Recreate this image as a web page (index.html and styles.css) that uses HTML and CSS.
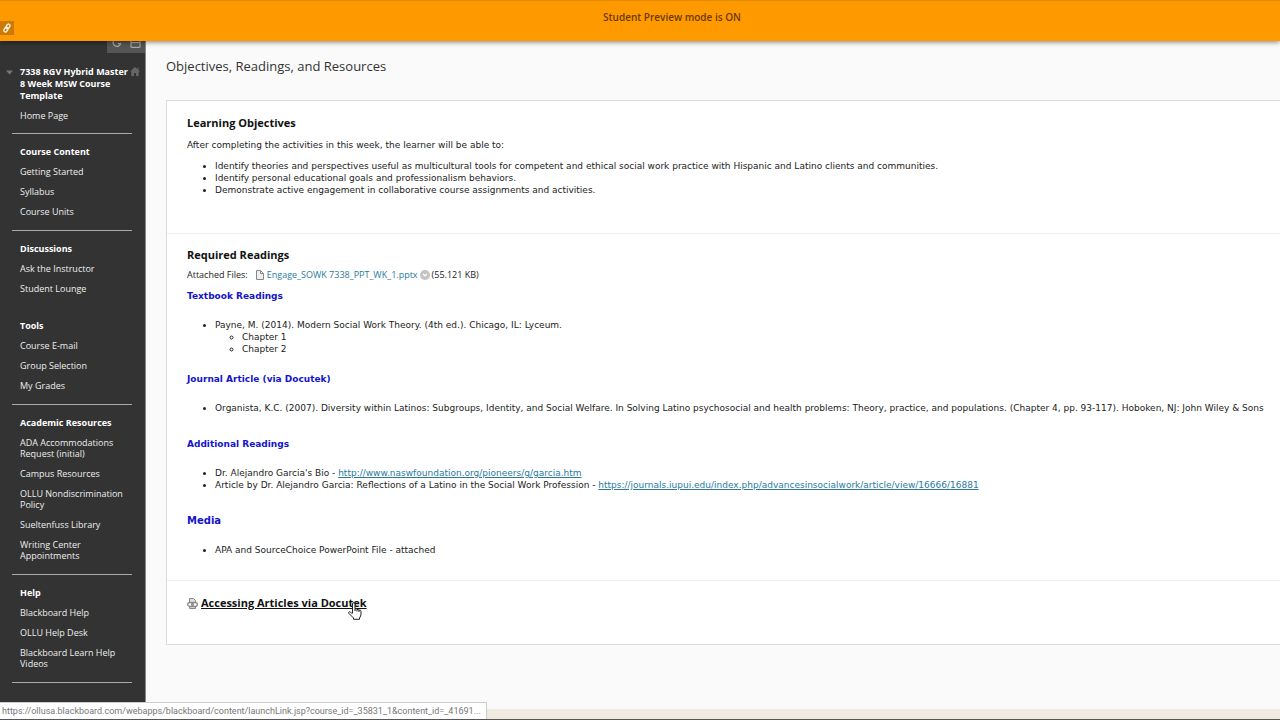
FILE: index.html
```html
<!DOCTYPE html>
<html lang="en">
<head>
<meta charset="utf-8">
<title>Objectives, Readings, and Resources</title>
<link rel="stylesheet" href="styles.css">
</head>
<body>
<div class="page">
  <header class="preview-bar">
    <p class="preview-text">Student Preview mode is ON</p>
    <button class="quick-link" type="button" aria-label="Quick links">
      <svg width="10" height="10" viewBox="0 0 10 10" fill="none" stroke="#fff0d8" stroke-width="1.4"><rect x="4.4" y="0.9" width="3.2" height="5" rx="1.6" transform="rotate(30 6 3.4)"/><rect x="2.3" y="4.1" width="3.2" height="5" rx="1.6" transform="rotate(30 3.9 6.6)"/></svg>
    </button>
  </header>
  <div class="columns">
    <nav class="sidebar" aria-label="Course menu">
      <div class="menu-tools">
        <button class="tool" type="button" aria-label="Refresh"><svg width="10" height="10" viewBox="0 0 10 10" fill="none" stroke="#a8a8a8" stroke-width="1.3"><path d="M2 1.2A3.8 3.8 0 1 0 8.6 4.6H5.8"/></svg></button>
        <button class="tool" type="button" aria-label="Folder view"><svg width="11" height="10" viewBox="0 0 11 10" fill="none" stroke="#a8a8a8" stroke-width="1.2"><path d="M1 3.600h9M1 1v6.4q0 1 1 1h7q1 0 1-1V1"/></svg></button>
      </div>
      <section class="group course">
        <svg class="caret" width="7" height="5" viewBox="0 0 7 5" fill="#777"><path d="M0 .5h7L3.5 4.5z"/></svg>
        <h2 class="course-title">7338 RGV Hybrid Master 8 Week MSW Course Template</h2>
        <svg class="home" width="10" height="9" viewBox="0 0 10 9" fill="#666"><path d="M5 0 0 4.6h1.3V9H4V6h2v3h2.7V4.6H10L8.6 3.3V.6H7.4v1.6z"/></svg>
        <a class="item" href="#">Home Page</a>
      </section>
      <section class="group">
        <h3 class="heading">Course Content</h3>
        <a class="item" href="#">Getting Started</a>
        <a class="item" href="#">Syllabus</a>
        <a class="item" href="#">Course Units</a>
      </section>
      <section class="group plain">
        <h3 class="heading">Discussions</h3>
        <a class="item" href="#">Ask the Instructor</a>
        <a class="item" href="#">Student Lounge</a>
      </section>
      <section class="group">
        <h3 class="heading">Tools</h3>
        <a class="item" href="#">Course E-mail</a>
        <a class="item" href="#">Group Selection</a>
        <a class="item" href="#">My Grades</a>
      </section>
      <section class="group">
        <h3 class="heading">Academic Resources</h3>
        <a class="item" href="#">ADA Accommodations Request (initial)</a>
        <a class="item" href="#">Campus Resources</a>
        <a class="item" href="#">OLLU Nondiscrimination Policy</a>
        <a class="item" href="#">Sueltenfuss Library</a>
        <a class="item" href="#">Writing Center Appointments</a>
      </section>
      <section class="group">
        <h3 class="heading">Help</h3>
        <a class="item" href="#">Blackboard Help</a>
        <a class="item" href="#">OLLU Help Desk</a>
        <a class="item" href="#">Blackboard Learn Help Videos</a>
      </section>
    </nav>
    <main class="main">
      <h1 class="title">Objectives, Readings, and Resources</h1>
      <div class="content">
        <article class="block objectives">
          <h2 class="block-title">Learning Objectives</h2>
          <p class="intro">After completing the activities in this week, the learner will be able to:</p>
          <ul class="list">
            <li>Identify theories and perspectives useful as multicultural tools for competent and ethical social work practice with Hispanic and Latino clients and communities.</li>
            <li>Identify personal educational goals and professionalism behaviors.</li>
            <li>Demonstrate active engagement in collaborative course assignments and activities.</li>
          </ul>
        </article>
        <article class="block readings">
          <h2 class="block-title">Required Readings</h2>
          <div class="files">
            <span>Attached Files:</span>
            <svg class="file-icon" width="8" height="10" viewBox="0 0 8 10" fill="#eee" stroke="#888"><path d="M.5.5h4l3 3v6h-7zM4.5.5v3h3"/></svg>
            <a class="file" href="#">Engage_SOWK 7338_PPT_WK_1.pptx</a>
            <button class="more" type="button" aria-label="File options"><svg width="10" height="10" viewBox="0 0 10 10"><circle cx="5" cy="5" r="5" fill="#c4c4c4"/><path d="m3 4 2 2 2-2" fill="none" stroke="#fff" stroke-width="1.2"/></svg></button>
            <span>(55.121 KB)</span>
          </div>
          <h3 class="sub">Textbook Readings</h3>
          <ul class="list outline">
            <li>Payne, M. (2014). Modern Social Work Theory. (4th ed.). Chicago, IL: Lyceum.
              <ul class="nested"><li>Chapter 1</li><li>Chapter 2</li></ul>
            </li>
          </ul>
          <h3 class="sub">Journal Article (via Docutek)</h3>
          <ul class="list">
            <li>Organista, K.C. (2007). Diversity within Latinos: Subgroups, Identity, and Social Welfare. In Solving Latino psychosocial and health problems: Theory, practice, and populations. (Chapter 4, pp. 93-117). Hoboken, NJ: John Wiley &amp; Sons</li>
          </ul>
          <h3 class="sub">Additional Readings</h3>
          <ul class="list">
            <li>Dr. Alejandro Garcia's Bio - <a class="link" href="#">http://www.naswfoundation.org/pioneers/g/garcia.htm</a></li>
            <li>Article by Dr. Alejandro Garcia: Reflections of a Latino in the Social Work Profession - <a class="link" href="#">https://journals.iupui.edu/index.php/advancesinsocialwork/article/view/16666/16881</a></li>
          </ul>
          <h3 class="sub media">Media</h3>
          <ul class="list">
            <li>APA and SourceChoice PowerPoint File - attached</li>
          </ul>
        </article>
        <article class="block access">
          <svg width="11" height="11" viewBox="0 0 11 11" fill="none" stroke="#888"><path d="M2.5 5V.5h4l2 2V5M2.5 8v2.500h6V8" fill="#ddd"/><rect x=".7" y="4.500" width="5.500" height="4" rx="2" stroke-width="1.3"/><rect x="4.800" y="4.500" width="5.500" height="4" rx="2" stroke-width="1.3"/></svg>
          <a class="access-link" href="#">Accessing Articles via Docutek
            <svg class="pointer" width="14" height="18" viewBox="0 0 14 18" fill="#fff" stroke="#222"><path d="M4.500 11V2q0-1.300 1.200-1.300T7 2v5q1.800-.8 2 .5 1.700-.6 2 .6 2-.4 2 1.300V12q0 2-1.500 4v1.300H5.500V16L1 11.500q-.8-1.400.4-1.800 1-.2 3.100 2.300M7 7v2M9 7.500v2M11 8v2"/></svg>
          </a>
        </article>
      </div>
    </main>
  </div>
  <footer class="strip"></footer>
  <div class="status">https://ollusa.blackboard.com/webapps/blackboard/content/launchLink.jsp?course_id=_35831_1&amp;content_id=_41691...</div>
</div>
</body>
</html>
```
FILE: styles.css
```css
* { box-sizing: border-box; }

body {
  margin: 0;
  font-family: "Open Sans", sans-serif;
  font-size: 9px;
  color: #222;
  overflow-x: hidden;
}

h1, h2, h3, p, ul { margin: 0; }
button { border: 0; padding: 0; }
svg { display: block; flex: none; }

.page {
  position: relative;
  display: flex;
  flex-direction: column;
  min-height: 100vh;
}

.preview-bar {
  position: relative;
  z-index: 2;
  height: 41px;
  padding: 9px 0 0 64px;
  background: #ff9900;
  border-top: 1px solid #e08a08;
  box-shadow: 0 1px 5px rgba(0, 0, 0, 0.5);
  text-align: center;
}

.preview-text {
  font-size: 10px;
  line-height: 14px;
  font-weight: 600;
  color: #6b3a00;
}

.quick-link {
  position: absolute;
  left: 0;
  bottom: 6px;
  width: 14px;
  height: 14px;
  padding: 2px;
  background: #c97a08;
}

.columns {
  display: flex;
  flex: 1;
}

.sidebar {
  position: relative;
  flex: none;
  width: 146px;
  padding: 25px 13px 0 12px;
  background: #333;
  border-right: 1px solid #888;
}

.menu-tools {
  position: absolute;
  top: 0;
  right: 0;
  display: flex;
  height: 12px;
  background: #555;
}

.tool {
  display: flex;
  align-items: end;
  justify-content: center;
  width: 19px;
  height: 8px;
  overflow: hidden;
  background: none;
}

.group {
  display: flex;
  flex-direction: column;
  gap: 9px;
  padding: 12px 0 13px 8px;
  border-bottom: 1px solid #aaa;
}

.plain { border-color: transparent; }

.course {
  position: relative;
  gap: 8px;
  padding-top: 0;
  padding-bottom: 12px;
}

.caret {
  position: absolute;
  left: -6px;
  top: 4px;
}

.home {
  position: absolute;
  right: -8px;
  top: 1px;
}

.course-title {
  font-size: 9px;
  line-height: 12px;
  color: #fff;
}

.heading {
  font-size: 9px;
  line-height: 11px;
  color: #fff;
}

.item {
  line-height: 11px;
  color: #eee;
  text-decoration: none;
}

.main {
  flex: 1;
  min-width: 0;
  padding: 15px 0 0 20px;
  background: #fafafa;
  overflow: hidden;
}

.title {
  margin-bottom: 24px;
  font-size: 13px;
  line-height: 20px;
  font-weight: normal;
  color: #333;
}

.content {
  background: #fff;
  border: 1px solid #ddd;
  border-right: 0;
}

.block {
  padding: 14px 0 0 20px;
  border-bottom: 1px solid #eee;
}

.objectives { padding-bottom: 13px; }

.readings { padding-top: 13px; }

.access {
  display: flex;
  align-items: center;
  gap: 3px;
  padding-bottom: 33px;
  border-bottom: 0;
}

.block-title {
  font-size: 11px;
  line-height: 16px;
  color: #111;
}

.intro {
  margin: 8px 0 9px;
  font: 9px/12px "DejaVu Sans", sans-serif;
}

.list {
  margin-bottom: 24px;
  padding-left: 28px;
  font: 9px/12px "DejaVu Sans", sans-serif;
  white-space: nowrap;
}

.outline { margin-bottom: 18px; }

.nested {
  padding-left: 27px;
}

.files {
  display: flex;
  align-items: center;
  margin-top: 6px;
  line-height: 12px;
}

.file-icon { margin: 0 3px 0 8px; }

.file {
  color: #2a7a9c;
  text-decoration: none;
}

.more {
  margin: 0 2px;
  background: none;
}

.sub {
  margin: 17px 0;
  font: bold 9px/12px "DejaVu Sans", sans-serif;
  color: #1414c8;
}

.files + .sub { margin-top: 9px; }

.media { font-size: 10px; }

.link { color: #2a7a9c; }

.access-link {
  position: relative;
  font-size: 11px;
  line-height: 16px;
  font-weight: bold;
  color: #111;
}

.pointer {
  position: absolute;
  right: 5px;
  top: 7px;
}

.strip {
  height: 11px;
  background: #efebe0;
  border-bottom: 1px solid #555;
}

.status {
  position: absolute;
  left: 0;
  bottom: 1px;
  padding: 1px 5px 1px 2px;
  background: #fff;
  border: solid #ccc;
  border-width: 1px 1px 0 0;
  font: 9px/14px Roboto, sans-serif;
  color: #777;
}
```
